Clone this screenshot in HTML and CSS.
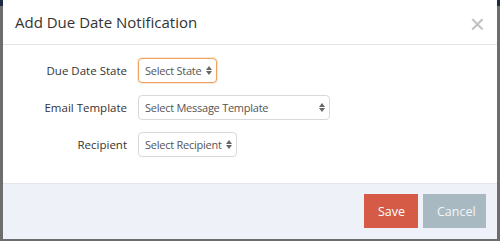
FILE: index.html
```html
<!DOCTYPE html>
<html>
<head>
  <meta charset="utf-8">
  <title>Add Due Date Notification</title>
  <link rel="stylesheet" href="styles.css">
</head>
<body>
  <div class="modal">
    <div class="modal-header">
      <h4 class="modal-title">Add Due Date Notification</h4>
      <span class="close">&times;</span>
    </div>
    <div class="modal-body">
      <label class="field-label">Due Date State</label>
      <div class="field"><select class="picker picker-focus"><option>Select State</option></select></div>
      <label class="field-label">Email Template</label>
      <div class="field"><select class="picker picker-wide"><option>Select Message Template</option></select></div>
      <label class="field-label">Recipient</label>
      <div class="field"><select class="picker"><option>Select Recipient</option></select></div>
    </div>
    <div class="modal-footer">
      <button class="btn btn-save">Save</button>
      <button class="btn btn-cancel">Cancel</button>
    </div>
  </div>
</body>
</html>
```
FILE: styles.css
```css
/* 背景（モーダルの外側） */
body {
  margin: 0;
  height: 241px;
  background: linear-gradient(#1d2a44 0, #1d2a44 6px, #6d6d6d 6px);
  font-family: "Open Sans", "Liberation Sans", sans-serif;
  overflow: hidden;
}

/* モーダル本体 */
.modal {
  margin: 0 3px;
  height: 239px;
  background-color: #ffffff;
  display: flex;
  flex-direction: column;
}

/* ヘッダー */
.modal-header {
  height: 44px;
  border-bottom: 1px solid #e5e5e5;
  display: flex;
  align-items: center;
  justify-content: space-between;
  padding: 0 12px 0 12px;
}

.modal-title {
  margin: 0;
  font-size: 15px;
  font-weight: normal;
  color: #333333;
}

.close {
  font-size: 26px;
  line-height: 1;
  color: #c0c0c0;
  font-family: "Liberation Sans", sans-serif;
  margin-top: 4px;
}

/* フォーム部分 */
.modal-body {
  flex: 1;
  display: grid;
  grid-template-columns: 124px auto;
  column-gap: 11px;
  row-gap: 12px;
  align-content: start;
  align-items: center;
  padding-top: 13px;
}

.field-label {
  text-align: right;
  font-size: 11.5px;
  color: #333333;
}

.field {
  display: flex;
}

/* セレクトボックス */
.picker {
  appearance: none;
  -webkit-appearance: none;
  height: 25px;
  border: 1px solid #d9d9d9;
  border-radius: 4px;
  background: #ffffff url("data:image/svg+xml;utf8,<svg xmlns='http://www.w3.org/2000/svg' width='6' height='9'><path d='M0 4 L3 0 L6 4 Z M0 5 L3 9 L6 5 Z' fill='%23666'/></svg>") no-repeat right 4px center;
  padding: 0 14px 0 6px;
  font-family: "Open Sans", "Liberation Sans", sans-serif;
  font-size: 11px;
  letter-spacing: -0.25px;
  color: #555555;
}

.picker-focus {
  border-color: #f0a35e;
  box-shadow: 0 0 0 1px rgba(240, 163, 94, 0.25);
}

.picker-wide {
  width: 192px;
}

/* フッター */
.modal-footer {
  height: 56px;
  border-top: 1px solid #e3e6ec;
  background-color: #eef1f7;
  display: flex;
  justify-content: flex-end;
  align-items: flex-start;
  gap: 5px;
  padding: 10px 11px 0 0;
  box-sizing: border-box;
}

.btn {
  height: 34px;
  border: none;
  font-family: "Open Sans", "Liberation Sans", sans-serif;
  font-size: 12.5px;
  padding: 0 14px;
}

.btn-save {
  background-color: #d55b47;
  color: #ffffff;
  width: 54px;
}

.btn-cancel {
  background-color: #a9b9c1;
  color: #f2f5f7;
  width: 63px;
}
```
